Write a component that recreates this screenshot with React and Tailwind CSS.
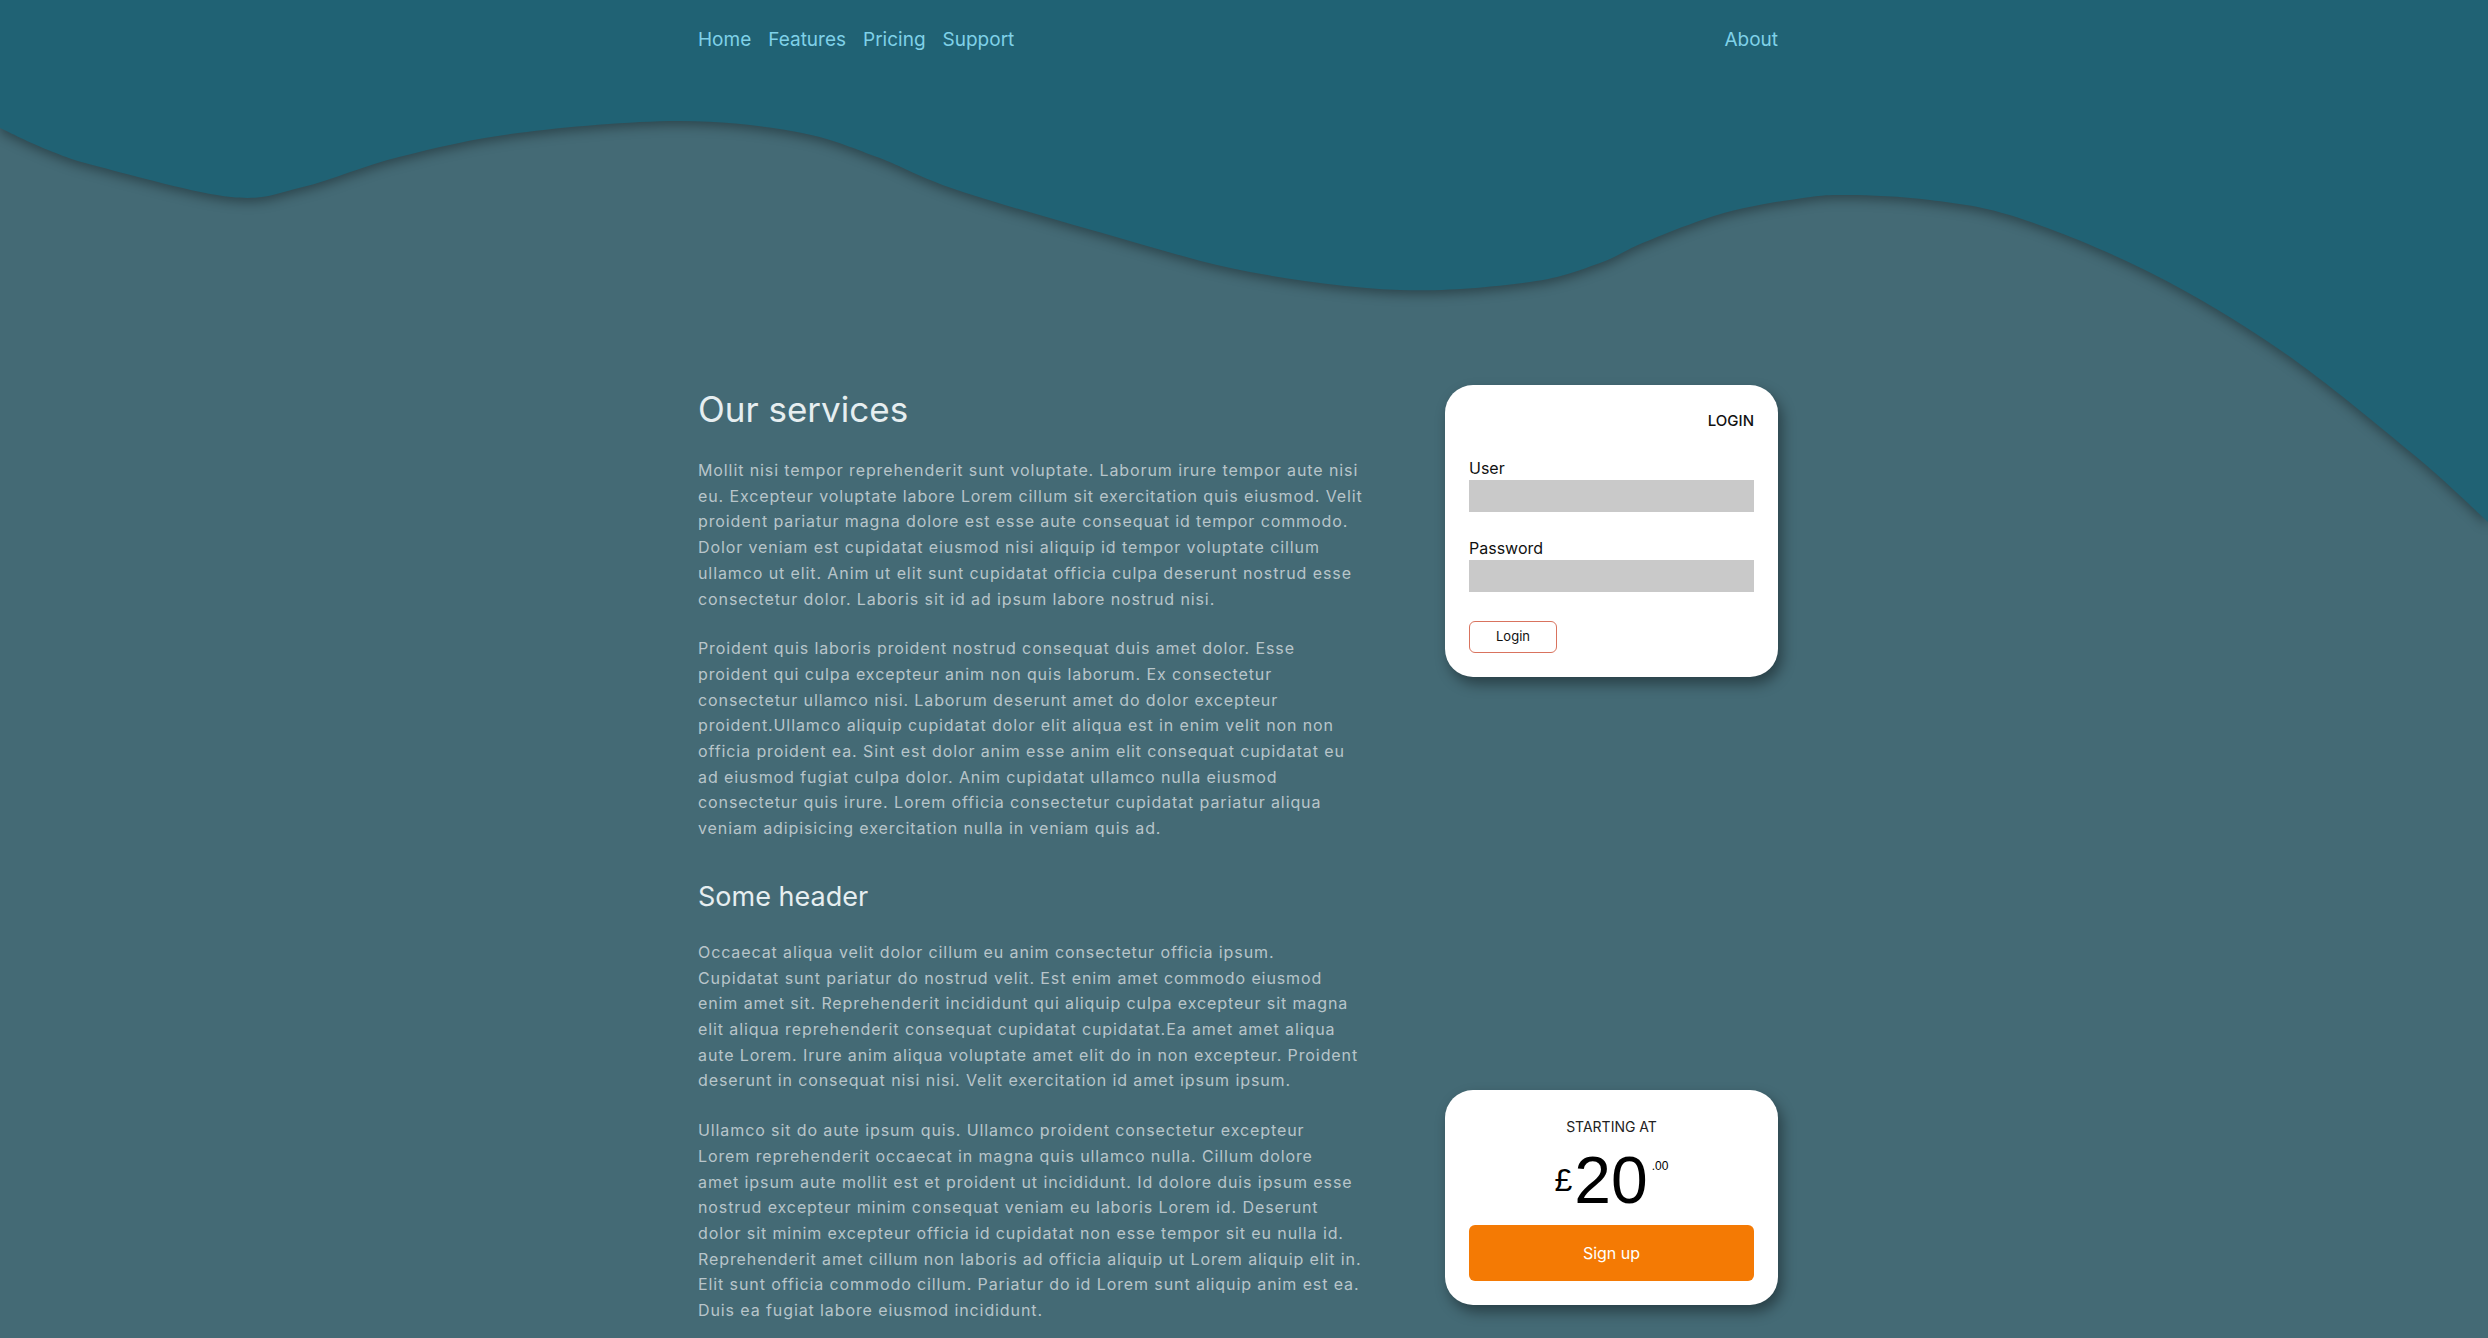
import React from "react";

const P1 = [
  "Mollit nisi tempor reprehenderit sunt voluptate. Laborum irure tempor aute nisi",
  "eu. Excepteur voluptate labore Lorem cillum sit exercitation quis eiusmod. Velit",
  "proident pariatur magna dolore est esse aute consequat id tempor commodo.",
  "Dolor veniam est cupidatat eiusmod nisi aliquip id tempor voluptate cillum",
  "ullamco ut elit. Anim ut elit sunt cupidatat officia culpa deserunt nostrud esse",
  "consectetur dolor. Laboris sit id ad ipsum labore nostrud nisi.",
];
const P2 = [
  "Proident quis laboris proident nostrud consequat duis amet dolor. Esse",
  "proident qui culpa excepteur anim non quis laborum. Ex consectetur",
  "consectetur ullamco nisi. Laborum deserunt amet do dolor excepteur",
  "proident.Ullamco aliquip cupidatat dolor elit aliqua est in enim velit non non",
  "officia proident ea. Sint est dolor anim esse anim elit consequat cupidatat eu",
  "ad eiusmod fugiat culpa dolor. Anim cupidatat ullamco nulla eiusmod",
  "consectetur quis irure. Lorem officia consectetur cupidatat pariatur aliqua",
  "veniam adipisicing exercitation nulla in veniam quis ad.",
];
const P3 = [
  "Occaecat aliqua velit dolor cillum eu anim consectetur officia ipsum.",
  "Cupidatat sunt pariatur do nostrud velit. Est enim amet commodo eiusmod",
  "enim amet sit. Reprehenderit incididunt qui aliquip culpa excepteur sit magna",
  "elit aliqua reprehenderit consequat cupidatat cupidatat.Ea amet amet aliqua",
  "aute Lorem. Irure anim aliqua voluptate amet elit do in non excepteur. Proident",
  "deserunt in consequat nisi nisi. Velit exercitation id amet ipsum ipsum.",
];
const P4 = [
  "Ullamco sit do aute ipsum quis. Ullamco proident consectetur excepteur",
  "Lorem reprehenderit occaecat in magna quis ullamco nulla. Cillum dolore",
  "amet ipsum aute mollit est et proident ut incididunt. Id dolore duis ipsum esse",
  "nostrud excepteur minim consequat veniam eu laboris Lorem id. Deserunt",
  "dolor sit minim excepteur officia id cupidatat non esse tempor sit eu nulla id.",
  "Reprehenderit amet cillum non laboris ad officia aliquip ut Lorem aliquip elit in.",
  "Elit sunt officia commodo cillum. Pariatur do id Lorem sunt aliquip anim est ea.",
  "Duis ea fugiat labore eiusmod incididunt.",
];

const WAVE = [
  [0, 128], [48, 150], [100, 167], [231, 197], [303, 187], [399, 157], [518, 133],
  [678, 121], [797, 132], [877, 157], [957, 190], [1116, 237], [1250, 272],
  [1400, 290], [1530, 282], [1600, 263], [1645, 242], [1724, 213], [1803, 198],
  [1848, 195], [1930, 200], [2019, 218], [2151, 273], [2283, 352], [2414, 455],
  [2488, 522],
];

function wavePath(pts) {
  let d = `M0,0 L${pts[0][0]},${pts[0][1]}`;
  for (let i = 0; i < pts.length - 1; i++) {
    const p0 = pts[i - 1] || pts[i];
    const p1 = pts[i];
    const p2 = pts[i + 1];
    const p3 = pts[i + 2] || p2;
    const c1x = p1[0] + (p2[0] - p0[0]) / 6;
    const c1y = p1[1] + (p2[1] - p0[1]) / 6;
    const c2x = p2[0] - (p3[0] - p1[0]) / 6;
    const c2y = p2[1] - (p3[1] - p1[1]) / 6;
    d += ` C${c1x.toFixed(1)},${c1y.toFixed(1)} ${c2x.toFixed(1)},${c2y.toFixed(1)} ${p2[0]},${p2[1]}`;
  }
  d += " L2488,0 Z";
  return d;
}

function Para({ lines, className = "" }) {
  return (
    <p className={"whitespace-nowrap text-[16px] leading-[25.7px] tracking-[0.9px] text-[#b8c5ca] " + className}>
      {lines.map((l, i) => (
        <React.Fragment key={i}>
          {l}
          {i < lines.length - 1 && <br />}
        </React.Fragment>
      ))}
    </p>
  );
}

export default function App() {
  return (
    <div
      className="relative min-h-screen overflow-hidden bg-[#446a75]"
      style={{ fontFamily: "Inter, 'Noto Sans', sans-serif" }}
    >
      <svg
        className="pointer-events-none absolute left-0 top-0 h-[560px] w-full drop-shadow-[0_4px_6px_rgba(0,0,0,0.35)]"
        viewBox="0 0 2488 560"
        preserveAspectRatio="none"
      >
        <path d={wavePath(WAVE)} fill="#206274" />
      </svg>

      <div className="relative pr-[12px]">
        <div className="mx-auto w-[1080px]">
          <nav className="flex items-center justify-between pt-[26px] text-[19px] leading-7 text-[#7fd1e8]">
            <div className="flex gap-[17px]">
              <a>Home</a>
              <a>Features</a>
              <a>Pricing</a>
              <a>Support</a>
            </div>
            <a>About</a>
          </nav>

          <main className="mt-[331px] flex items-start justify-between">
            <div className="flex w-[700px] flex-col">
              <h1 className="mb-[28px] pt-[3px] text-[35px] leading-[1.2] text-[#e6eef0]">Our services</h1>
              <Para lines={P1} className="mb-6" />
              <Para lines={P2} className="mb-[39px]" />
              <h2 className="mb-[28px] text-[27px] leading-[1.15] text-[#e6eef0]">Some header</h2>
              <Para lines={P3} className="mb-6" />
              <Para lines={P4} />
            </div>

            <aside className="flex h-[920px] w-[333px] flex-col justify-between">
              <div className="rounded-[28px] bg-white px-6 pb-6 pt-[24px] shadow-[4px_7px_14px_rgba(0,0,0,0.4)]">
                <div className="text-right text-[15px] font-medium leading-6 text-[#111]">LOGIN</div>
                <div className="mt-[23px] text-[16px] leading-6 text-[#111]">User</div>
                <div className="h-8 bg-[#c9c9c9]" />
                <div className="mt-6 text-[16px] leading-6 text-[#111]">Password</div>
                <div className="h-8 bg-[#c9c9c9]" />
                <button className="mt-[29px] flex h-8 w-[88px] items-center justify-center rounded-[6px] border border-[#d9735e] text-[13px] text-[#111]">
                  Login
                </button>
              </div>

              <div className="rounded-[28px] bg-white px-6 pb-6 pt-[27px] shadow-[4px_7px_14px_rgba(0,0,0,0.4)]">
                <div className="text-center text-[14px] leading-5 text-[#222]">STARTING AT</div>
                <div
                  className="mt-[10px] flex h-[66px] items-start justify-center text-black"
                  style={{ fontFamily: "'Liberation Sans', Arial, sans-serif" }}
                >
                  <span className="mt-[17px] text-[32px] leading-none">£</span>
                  <span className="ml-[2px] text-[66px] leading-none">20</span>
                  <span className="ml-[4px] mt-[13px] text-[12px] leading-none">.00</span>
                </div>
                <button className="mt-[12px] flex h-14 w-full items-center justify-center rounded-[6px] bg-[#f47a04] text-[16px] text-white">
                  Sign up
                </button>
              </div>
            </aside>
          </main>
        </div>
      </div>
    </div>
  );
}
